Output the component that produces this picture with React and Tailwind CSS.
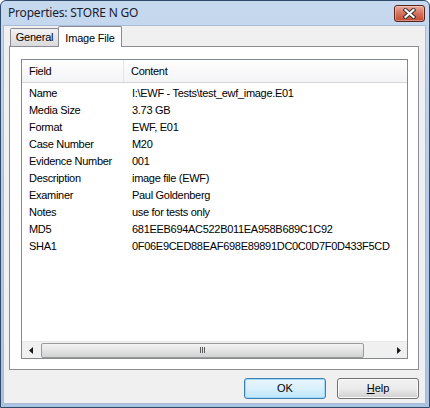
import React from 'react';

const rows = [
  ['Name', 'I:\\EWF - Tests\\test_ewf_image.E01'],
  ['Media Size', '3.73 GB'],
  ['Format', 'EWF, E01'],
  ['Case Number', 'M20'],
  ['Evidence Number', '001'],
  ['Description', 'image file (EWF)'],
  ['Examiner', 'Paul Goldenberg'],
  ['Notes', 'use for tests only'],
  ['MD5', '681EEB694AC522B011EA958B689C1C92'],
  ['SHA1', '0F06E9CED88EAF698E89891DC0C0D7F0D433F5CD'],
];

const CloseButton = () => (
  <div className="w-[31px] h-[17px] rounded-[3px] border border-[#5a2419] bg-gradient-to-b from-[#e9a99b] via-[#d4715d] to-[#c24a33] flex items-center justify-center shadow-[inset_0_0_0_1px_rgba(255,255,255,0.35)]">
    <svg width="13" height="11" viewBox="0 0 13 11">
      <path d="M2.5 2 L10.5 9 M10.5 2 L2.5 9" stroke="#3a2a2a" strokeWidth="4" strokeLinecap="square" />
      <path d="M2.5 2 L10.5 9 M10.5 2 L2.5 9" stroke="#ffffff" strokeWidth="2.2" strokeLinecap="square" />
    </svg>
  </div>
);

const ScrollBar = () => (
  <div className="h-[17px] flex items-center bg-[#f0f0f0] border-t border-[#e8e8e8]">
    <div className="w-[17px] h-full flex items-center justify-center">
      <svg width="4" height="7" viewBox="0 0 4 7"><path d="M4 0 L0 3.5 L4 7 Z" fill="#1a1a1a" /></svg>
    </div>
    <div className="ml-[2px] w-[323px] h-[15px] rounded-[2px] border border-[#9a9a9a] bg-gradient-to-b from-[#f4f4f4] via-[#e4e4e4] to-[#d2d2d2] flex items-center justify-center">
      <div className="flex gap-[1px]">
        <div className="w-[1px] h-[6px] bg-[#5a5a5a]" />
        <div className="w-[1px] h-[6px] bg-[#5a5a5a]" />
        <div className="w-[1px] h-[6px] bg-[#5a5a5a]" />
      </div>
    </div>
    <div className="flex-1" />
    <div className="w-[17px] h-full flex items-center justify-center">
      <svg width="4" height="7" viewBox="0 0 4 7"><path d="M0 0 L4 3.5 L0 7 Z" fill="#1a1a1a" /></svg>
    </div>
  </div>
);

export default function App() {
  return (
    <div className="w-[430px] h-[408px] flex flex-col rounded-t-[6px] border border-[#2f4a6b] bg-gradient-to-b from-[#c6d9ef] via-[#b2cae5] to-[#a9c3e0] font-['Liberation_Sans',Arial,sans-serif]">
      {/* title bar */}
      <div className="h-[24px] flex items-start justify-between pl-[7px] pr-[4px]">
        <span className="mt-[5px] text-[12px] text-[#1b1b2e] font-['Noto_Sans',Arial,sans-serif] leading-[14px] tracking-[-0.2px]">Properties: STORE N GO</span>
        <div className="mt-[4px]"><CloseButton /></div>
      </div>

      {/* client */}
      <div className="flex-1 ml-[2px] mr-[3px] mb-[3px] bg-[#f0f0f0] border border-[#a9bed6] pl-[5px]">
        <div className="w-[410px] flex flex-col">
          {/* tabs */}
          <div className="h-[21px] flex items-end pl-[1px] relative z-10 text-[11px] tracking-[-0.2px]">
            <div className="w-[49px] h-[18px] mb-[1px] border border-b-0 border-[#898c95] rounded-t-[2px] bg-gradient-to-b from-[#f3f3f3] to-[#dadada] flex items-center justify-center text-black">
              General
            </div>
            <div className="-ml-[1px] w-[64px] h-[21px] border border-b-0 border-[#898c95] rounded-t-[2px] bg-white flex items-start justify-center pt-[3px] text-black">
              Image File
            </div>
          </div>

          {/* panel */}
          <div className="-mt-[1px] h-[324px] border border-[#898c95] bg-white pt-[12px] pl-[11px]">
            <div className="w-[387px] h-[300px] border border-[#828790] bg-white flex flex-col text-[11px] text-black tracking-[-0.3px]">
              <div className="h-[23px] flex items-center bg-gradient-to-b from-white to-[#f3f4f6] border-b border-[#d5d5d5]">
                <div className="w-[102px] h-full flex items-center pl-[7px] border-r border-[#e3e5e7]">Field</div>
                <div className="pl-[7px]">Content</div>
              </div>
              <div className="flex-1 pt-[2px]">
                {rows.map(([f, c]) => (
                  <div key={f} className="h-[17px] flex items-center">
                    <div className="w-[110px] pl-[7px] whitespace-nowrap">{f}</div>
                    <div className="whitespace-nowrap">{c}</div>
                  </div>
                ))}
              </div>
              <ScrollBar />
            </div>
          </div>

          {/* buttons */}
          <div className="mt-[8px] flex justify-end gap-[11px] text-[11px] text-black">
            <button className="w-[82px] h-[21px] rounded-[3px] border border-[#3c7fb1] bg-gradient-to-b from-[#eaf6fd] via-[#d9f0fc] to-[#bee6fd] shadow-[inset_0_0_0_1px_#9fd9f7]">
              OK
            </button>
            <button className="w-[82px] h-[21px] rounded-[3px] border border-[#707070] bg-gradient-to-b from-[#f2f2f2] via-[#ebebeb] to-[#cfcfcf] shadow-[inset_0_0_0_1px_#fcfcfc]">
              <span className="underline">H</span>elp
            </button>
          </div>
        </div>
      </div>
    </div>
  );
}
